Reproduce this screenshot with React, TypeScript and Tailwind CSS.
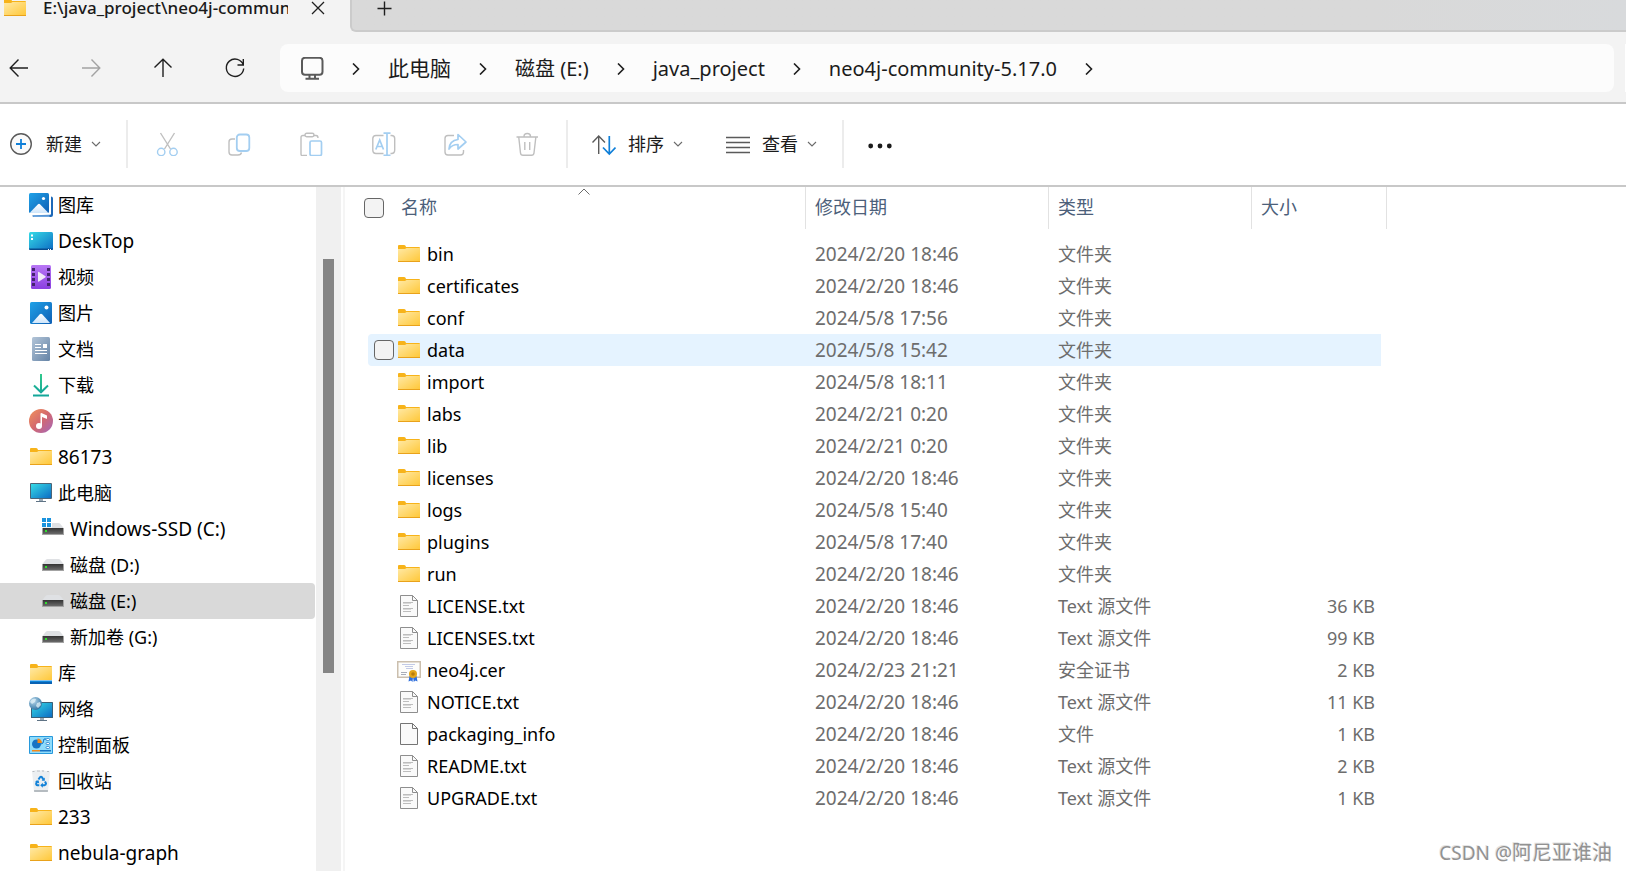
import { useState } from "react";
import type { ReactNode } from "react";

type IconName =
  | "gallery"
  | "desktop"
  | "video"
  | "picture"
  | "document"
  | "download"
  | "music"
  | "folder"
  | "pc"
  | "system-drive"
  | "drive"
  | "library"
  | "network"
  | "control"
  | "recycle"
  | "text"
  | "blank"
  | "cert";

type NavItem = { label: string; icon: IconName; indent?: boolean };

type FileRow = { name: string; date: string; type: string; size?: string; icon: IconName };

const NAV_ITEMS: NavItem[] = [
  { label: "图库", icon: "gallery" },
  { label: "DeskTop", icon: "desktop" },
  { label: "视频", icon: "video" },
  { label: "图片", icon: "picture" },
  { label: "文档", icon: "document" },
  { label: "下载", icon: "download" },
  { label: "音乐", icon: "music" },
  { label: "86173", icon: "folder" },
  { label: "此电脑", icon: "pc" },
  { label: "Windows-SSD (C:)", icon: "system-drive", indent: true },
  { label: "磁盘 (D:)", icon: "drive", indent: true },
  { label: "磁盘 (E:)", icon: "drive", indent: true },
  { label: "新加卷 (G:)", icon: "drive", indent: true },
  { label: "库", icon: "library" },
  { label: "网络", icon: "network" },
  { label: "控制面板", icon: "control" },
  { label: "回收站", icon: "recycle" },
  { label: "233", icon: "folder" },
  { label: "nebula-graph", icon: "folder" },
];

const FILES: FileRow[] = [
  { name: "bin", date: "2024/2/20 18:46", type: "文件夹", icon: "folder" },
  { name: "certificates", date: "2024/2/20 18:46", type: "文件夹", icon: "folder" },
  { name: "conf", date: "2024/5/8 17:56", type: "文件夹", icon: "folder" },
  { name: "data", date: "2024/5/8 15:42", type: "文件夹", icon: "folder" },
  { name: "import", date: "2024/5/8 18:11", type: "文件夹", icon: "folder" },
  { name: "labs", date: "2024/2/21 0:20", type: "文件夹", icon: "folder" },
  { name: "lib", date: "2024/2/21 0:20", type: "文件夹", icon: "folder" },
  { name: "licenses", date: "2024/2/20 18:46", type: "文件夹", icon: "folder" },
  { name: "logs", date: "2024/5/8 15:40", type: "文件夹", icon: "folder" },
  { name: "plugins", date: "2024/5/8 17:40", type: "文件夹", icon: "folder" },
  { name: "run", date: "2024/2/20 18:46", type: "文件夹", icon: "folder" },
  { name: "LICENSE.txt", date: "2024/2/20 18:46", type: "Text 源文件", size: "36 KB", icon: "text" },
  { name: "LICENSES.txt", date: "2024/2/20 18:46", type: "Text 源文件", size: "99 KB", icon: "text" },
  { name: "neo4j.cer", date: "2024/2/23 21:21", type: "安全证书", size: "2 KB", icon: "cert" },
  { name: "NOTICE.txt", date: "2024/2/20 18:46", type: "Text 源文件", size: "11 KB", icon: "text" },
  { name: "packaging_info", date: "2024/2/20 18:46", type: "文件", size: "1 KB", icon: "blank" },
  { name: "README.txt", date: "2024/2/20 18:46", type: "Text 源文件", size: "2 KB", icon: "text" },
  { name: "UPGRADE.txt", date: "2024/2/20 18:46", type: "Text 源文件", size: "1 KB", icon: "text" },
];

const CRUMBS = ["此电脑", "磁盘 (E:)", "java_project", "neo4j-community-5.17.0"];

// Gradients shared by all file and place icons.
function IconDefs() {
  return (
    <svg width="0" height="0" className="absolute" aria-hidden>
      <defs>
        <linearGradient id="g-folder" x1="0" y1="0" x2="1" y2="1">
          <stop offset="0" stopColor="#ffe9a6" />
          <stop offset="1" stopColor="#ffc83a" />
        </linearGradient>
        <linearGradient id="g-blue" x1="0" y1="0" x2="1" y2="1">
          <stop offset="0" stopColor="#1fa2e8" />
          <stop offset="1" stopColor="#0f5fb4" />
        </linearGradient>
        <linearGradient id="g-cyan" x1="0" y1="0" x2="1" y2="1">
          <stop offset="0" stopColor="#35dbe6" />
          <stop offset="1" stopColor="#0d6cc4" />
        </linearGradient>
        <linearGradient id="g-snow" x1="0" y1="0" x2="0" y2="1">
          <stop offset="0" stopColor="#ffffff" />
          <stop offset="1" stopColor="#cfe6fb" />
        </linearGradient>
        <linearGradient id="g-purple" x1="0" y1="0" x2="0" y2="1">
          <stop offset="0" stopColor="#b877f5" />
          <stop offset="1" stopColor="#8a3fe0" />
        </linearGradient>
        <linearGradient id="g-steel" x1="0" y1="0" x2="1" y2="1">
          <stop offset="0" stopColor="#b3c5d8" />
          <stop offset="1" stopColor="#6483a6" />
        </linearGradient>
        <linearGradient id="g-green" x1="0" y1="0" x2="0" y2="1">
          <stop offset="0" stopColor="#31c98c" />
          <stop offset="1" stopColor="#12a59a" />
        </linearGradient>
        <linearGradient id="g-music" x1="0" y1="0" x2="1" y2="1">
          <stop offset="0" stopColor="#f2935a" />
          <stop offset="0.5" stopColor="#d3686f" />
          <stop offset="1" stopColor="#a367bd" />
        </linearGradient>
        <linearGradient id="g-drive" x1="0" y1="0" x2="0" y2="1">
          <stop offset="0" stopColor="#333333" />
          <stop offset="1" stopColor="#6a6a6a" />
        </linearGradient>
        <radialGradient id="g-globe" cx="0.35" cy="0.3" r="0.8">
          <stop offset="0" stopColor="#b9d9ec" />
          <stop offset="1" stopColor="#246a9c" />
        </radialGradient>
      </defs>
    </svg>
  );
}

function DriveBody() {
  return (
    <>
      <path d="M1 11.500 5 6.500Q5.500 6 6.500 6H17.500Q18.500 6 19 6.500L23 11.500Z" fill="#dfe1e4" />
      <rect x="1" y="11" width="22" height="7" fill="#a3a3a3" />
      <rect x="2" y="11" width="20" height="6" fill="url(#g-drive)" />
      <rect x="4" y="13" width="2" height="2" fill="#2ee02e" />
    </>
  );
}

const ART: Record<IconName, ReactNode> = {
  gallery: (
    <>
      <path d="M22 3.500Q24 3.500 24 5.500V22Q24 24 22 24H5Q3.500 24 3.500 22.500L22 21.500Z" fill="#1c68b8" />
      <path d="M3.500 22.300H20.500V24H5Q3.500 24 3.500 22.300Z" fill="#6da5de" />
      <rect width="21" height="21.500" fill="#fff" />
      <rect width="20" height="20" rx="1.500" fill="url(#g-blue)" />
      <path d="M1 19.500 9 11.300Q10 10.300 11 11.300L19 19.500Q18.800 20 18 20H2Q1.200 20 1 19.500Z" fill="url(#g-snow)" />
      <circle cx="14.500" cy="5.500" r="1.600" fill="#fff" />
    </>
  ),
  desktop: (
    <>
      <rect y="3" width="24" height="18" rx="1.500" fill="url(#g-cyan)" />
      <path d="M0 19.500H24Q24 21 22.500 21H1.500Q0 21 0 19.500Z" fill="#084a8c" />
      <path d="M2 5.500h2v2H2zM2 9h2v2H2zM19 20h1v1h-1zM21 20h1v1h-1z" fill="#fff" />
    </>
  ),
  video: (
    <>
      <rect x="2" width="20" height="24" rx="1.500" fill="url(#g-purple)" />
      <path
        d="M3 3h3v3H3zM3 8h3v3H3zM3 13h3v3H3zM3 18h3v3H3zM18 3h3v3h-3zM18 8h3v3h-3zM18 13h3v3h-3zM18 18h3v3h-3z"
        fill="#45246f"
      />
      <path d="M9 7.500Q9 6.500 10 7L16.500 11.200Q17 11.700 16.500 12.200L10 16.500Q9 17 9 16Z" fill="#f1eaf8" />
    </>
  ),
  picture: (
    <>
      <rect x="1" y="1" width="22" height="22" rx="1.500" fill="url(#g-blue)" />
      <path d="M3 22 10.800 13.300Q12 12.200 13.200 13.300L21 22Z" fill="url(#g-snow)" />
      <circle cx="17.500" cy="6.500" r="2" fill="#fff" />
    </>
  ),
  document: (
    <>
      <rect x="3" width="18" height="24" rx="1.500" fill="url(#g-steel)" />
      <path d="M6 7.500h6M6 10.500h6M6 13.500h12M6 16.500h12" stroke="#fff" strokeWidth="1.200" />
      <rect x="14" y="7" width="4" height="4" fill="#fff" />
    </>
  ),
  download: (
    <>
      <path d="M12 1V19M5 12.500 12 19.300 19 12.500" fill="none" stroke="url(#g-green)" strokeWidth="2" />
      <path d="M11 1h2v18h-2zM4 21.500h16v2H4z" fill="url(#g-green)" />
    </>
  ),
  music: (
    <>
      <circle cx="12" cy="12" r="12" fill="url(#g-music)" />
      <circle cx="10" cy="17" r="3" fill="#fff" />
      <path d="M11.500 4.500Q12 3.800 13 4.300L18 6.500V10L13 8V17H11.500Z" fill="#fff" />
    </>
  ),
  folder: (
    <>
      <path d="M1 4Q1 3 2 3H7Q8 3 8.500 3.800L9 5H22Q23 5 23 6V10H1Z" fill="#f7b31a" />
      <path d="M1 7H8L9.500 6H23V19H1Z" fill="url(#g-folder)" />
      <rect x="1" y="19" width="22" height="1" fill="#e9a21b" />
    </>
  ),
  pc: (
    <>
      <rect x="1" y="2" width="22" height="16" rx="1" fill="#4b6477" />
      <rect x="2" y="3" width="20" height="14" fill="url(#g-cyan)" />
      <path d="M10 18h4v2h-4z" fill="#9aa9b5" />
      <path d="M7 20h10v1H7z" fill="#5f7385" />
    </>
  ),
  "system-drive": (
    <>
      <DriveBody />
      <rect width="11" height="10.500" fill="#fff" />
      <path d="M1 1h4v4H1zM6 1h4v4H6zM1 6h4v4H1zM6 6h4v4H6z" fill="#1b93de" />
    </>
  ),
  drive: <DriveBody />,
  library: (
    <>
      <path d="M1 4Q1 3 2 3H7Q8 3 8.500 3.800L9 5H22Q23 5 23 6V10H1Z" fill="#f7b31a" />
      <path d="M1 7H8L9.500 6H23V19H1Z" fill="url(#g-folder)" />
      <path d="M1 19.500h22V21H1z" fill="#0f86dc" />
      <path d="M1 21h22v2H1z" fill="#0a62b3" />
    </>
  ),
  network: (
    <>
      <rect x="2" y="5" width="22" height="16" rx="0.500" fill="#3a6078" />
      <rect x="3" y="6" width="20" height="14" fill="url(#g-cyan)" />
      <path d="M11 21h4v2h-4z" fill="#9aa9b5" />
      <path d="M8 23h10v1H8z" fill="#5f7385" />
      <circle cx="6.500" cy="6.500" r="6.500" fill="url(#g-globe)" />
      <path d="M2 3Q5 1 7 2L6 5 3 7 1 5ZM8 6 11 5 12 8 9 11 7 9Z" fill="#e3f1f8" opacity="0.75" />
    </>
  ),
  control: (
    <>
      <rect y="3" width="24" height="18" rx="1" fill="#2799dc" />
      <rect x="1" y="4" width="22" height="16" fill="#8fdcfb" />
      <circle cx="7.500" cy="11" r="4.500" fill="#1673c4" />
      <path d="M8.500 10V5.500A4.500 4.500 0 0 1 13 10Z" fill="#f28a1c" />
      <path d="M3 17h8v1.500H3z" fill="#f28a1c" />
      <path d="M11 17h11v1.500H11z" fill="#1673c4" />
      <path d="M12 11l2-1 1-4h2" fill="none" stroke="#1673c4" />
      <rect x="17" y="5.500" width="3.500" height="2" rx="1" fill="#fff" stroke="#1673c4" strokeWidth="0.700" />
      <rect x="17" y="9.500" width="3.500" height="2" rx="1" fill="#fff" stroke="#1673c4" strokeWidth="0.700" />
      <rect x="17" y="13.500" width="3.500" height="2" rx="1" fill="#fff" stroke="#1673c4" strokeWidth="0.700" />
    </>
  ),
  recycle: (
    <>
      <path d="M3 2 7 1 10 2 13 1 17 2 21 2.500 19 23H5Z" fill="#eceff1" />
      <path d="M5 21h14l-.2 2H5.200Z" fill="#b5bbc0" />
      <path d="M3.500 2.500h2M8 2h3M13 2h2M18 2.500h2" stroke="#b9bdc1" />
      <path
        d="M9.500 10.500 11 8.200Q12 7.500 13 8.200L14.300 10.500M16 12.500 17 14.500Q17 16 15.500 16.200H13M10.300 16.200H8.500Q7 16 7.200 14.300L8.500 12"
        fill="none"
        stroke="#1382d8"
        strokeWidth="2"
      />
      <path d="M15.800 8.500v3.200h-3.200zM13.800 13.700v5l-2.600-2.500zM6 12.200l3.500-1 .8 3.300z" fill="#1382d8" />
    </>
  ),
  text: (
    <>
      <path d="M3.500 1.500H15.500L20.500 6.500V22.500H3.500Z" fill="#fafafa" stroke="#8e8e8e" />
      <path d="M15.500 1.500V6.500H20.500" fill="none" stroke="#8e8e8e" />
      <path d="M6 8.500h10M6 11.500h6M6 14.500h10M6 17.500h8" stroke="#bdbdbd" />
      <path d="M6 9.500h8M6 15.500h8" stroke="#d9d9d9" />
    </>
  ),
  blank: (
    <>
      <path d="M3.500 1.500H15.500L20.500 6.500V22.500H3.500Z" fill="#fafafa" stroke="#757575" />
      <path d="M15.500 1.500V6.500H20.500" fill="none" stroke="#757575" />
    </>
  ),
  cert: (
    <>
      <rect x="0.750" y="3.750" width="22.500" height="15.500" fill="#fdfdfb" stroke="#cbbfae" strokeWidth="1.500" />
      <path d="M5 6.500h13M8 8.500h8M9 10.500h7" stroke="#c3cbe6" />
      <path d="M4 14.500h6M4 16.500h5" stroke="#a9adb8" />
      <path d="M12.500 18 11.500 23.500 14 22.500 15.500 24 16 19ZM19.500 18 20.500 23.500 18.200 22.500 16.800 24 16 19Z" fill="#2f6fdc" />
      <circle cx="16" cy="16" r="4" fill="#e3a51a" />
      <circle cx="16" cy="16" r="1.800" fill="#b77b0c" />
    </>
  ),
};

function ItemIcon({ name }: { name: IconName }) {
  return (
    <svg viewBox="0 0 24 24" className="size-6 shrink-0" aria-hidden>
      {ART[name]}
    </svg>
  );
}

function LineIcon({ children, color = "#1f1f1f", width = 1.4 }: { children: ReactNode; color?: string; width?: number }) {
  return (
    <svg viewBox="0 0 24 24" className="size-6 shrink-0" fill="none" stroke={color} strokeWidth={width} aria-hidden>
      {children}
    </svg>
  );
}

function ChevronRight() {
  return (
    <svg viewBox="0 0 12 12" className="size-3 shrink-0" fill="none" stroke="#1f1f1f" strokeWidth="1.600" aria-hidden>
      <path d="M3 0.500 8.500 6 3 11.500" />
    </svg>
  );
}

function ChevronDown() {
  return (
    <svg viewBox="0 0 12 12" className="-ml-1 size-3 shrink-0" fill="none" stroke="#6b6b6b" strokeWidth="1.100" aria-hidden>
      <path d="M2 4 6 8 10 4" />
    </svg>
  );
}

function Divider() {
  return <div className="mr-7 ml-6 h-12 w-0.5 shrink-0 bg-[#ececec]" />;
}

function TabStrip() {
  return (
    <div className="flex h-8 shrink-0 bg-[#f3f3f3]">
      <div className="flex w-[350px] shrink-0 items-start pl-[3px]">
        <div className="-mt-1">
          <ItemIcon name="folder" />
        </div>
        <span className="ml-4 h-8 w-[245px] overflow-hidden text-[17px] leading-4 font-medium whitespace-nowrap text-[#1a1a1a]">
          E:\java_project\neo4j-community-5.17.0
        </span>
        <button type="button" aria-label="Close tab" className="ml-[18px] -mt-1">
          <LineIcon width={1.3}>
            <path d="M6 6 18 18M18 6 6 18" />
          </LineIcon>
        </button>
      </div>
      <div className="flex flex-1 items-start rounded-bl-md border-b-2 border-l-2 border-[#cbcbcb] bg-linear-to-r from-[#d9d9d9] from-80% to-[#d8dadc]">
        <button type="button" aria-label="New tab" className="ml-5 -mt-1">
          <LineIcon width={1.4}>
            <path d="M12.500 5.500V19.500M5.500 12.500H19.500" />
          </LineIcon>
        </button>
      </div>
    </div>
  );
}

function AddressRow() {
  return (
    <div className="flex shrink-0 items-center border-b-2 border-[#c8c8c8] bg-[#f3f3f3] pt-3 pb-2.5 pl-[7px]">
      <div className="flex shrink-0 gap-12">
        <button type="button" aria-label="Back">
          <LineIcon>
            <path d="M21 12H3.500M11.500 3.500 3.200 12 11.500 20.500" />
          </LineIcon>
        </button>
        <button type="button" aria-label="Forward" disabled>
          <LineIcon color="#a3a3a3">
            <path d="M3 12H20.500M12.500 3.500 20.800 12 12.500 20.500" />
          </LineIcon>
        </button>
        <button type="button" aria-label="Up">
          <LineIcon>
            <path d="M12 21V3.500M3.500 11.500 12 3.200 20.500 11.500" />
          </LineIcon>
        </button>
        <button type="button" aria-label="Refresh">
          <LineIcon>
            <path d="M20.300 9A8.700 8.700 0 1 0 20.700 12.500M20.300 3V9H14.500" />
          </LineIcon>
        </button>
      </div>
      <nav
        aria-label="Path"
        className="ml-[33px] flex h-12 min-w-0 flex-1 items-center gap-[26px] overflow-hidden rounded-lg bg-[#fcfcfc] pt-0.5 pl-5 whitespace-nowrap text-[#1b1b1b]"
      >
        <svg viewBox="0 0 24 24" className="size-6 shrink-0" fill="none" stroke="#5a5a5a" strokeWidth="2" aria-hidden>
          <rect x="2" y="0.800" width="20.500" height="17" rx="3" />
          <path d="M9.500 18V21.500M15 18V21.500M5.500 21.800H19" />
        </svg>
        <ChevronRight />
        {CRUMBS.map((crumb, i) => (
          <span key={crumb} className="flex items-center gap-[26px]">
            <a href="#" className={i === 0 ? "text-[21px]" : "text-xl"}>
              {crumb}
            </a>
            <ChevronRight />
          </span>
        ))}
      </nav>
      <div className="ml-[11px] h-12 w-px shrink-0 bg-white" />
    </div>
  );
}

function CommandBar() {
  const soft = "#a3cef1";
  return (
    <div className="flex h-[83px] shrink-0 items-center border-b-2 border-[#c8c8c8] bg-white pb-px pl-2.5 text-lg whitespace-nowrap text-[#1b1b1b]">
      <button type="button" className="flex items-center gap-3">
        <LineIcon color="#5a5a5a">
          <circle cx="11" cy="12" r="10.300" fill="#fafafa" />
          <path d="M11 7V17M6 12H16" stroke="#0f7fd8" strokeWidth="1.800" />
        </LineIcon>
        新建
        <ChevronDown />
      </button>
      <Divider />
      <div className="flex gap-12 pr-0.5">
        <button type="button" aria-label="Cut" disabled>
          <LineIcon color="#bfbfbf">
            <path d="M4.500 1 14.500 17M18.500 1 8.500 17" />
            <circle cx="5.200" cy="20" r="3.700" stroke={soft} />
            <circle cx="17.500" cy="20" r="3.700" stroke={soft} />
          </LineIcon>
        </button>
        <button type="button" aria-label="Copy" disabled>
          <LineIcon color="#bfbfbf">
            <path d="M7 7H4Q1 7 1 10V20Q1 23 4 23H10Q13 23 13.500 20.500" />
            <rect x="8.800" y="2.500" width="12.500" height="16.500" rx="3" stroke={soft} strokeWidth="1.800" />
          </LineIcon>
        </button>
        <button type="button" aria-label="Paste" disabled>
          <LineIcon color="#bfbfbf">
            <path d="M5 3.500H3Q1 3.500 1 5.500V22Q1 24 3 23.500H7M13.500 3.500H16Q18 3.500 18 6" />
            <rect x="5" y="1.200" width="9" height="3.500" rx="1.700" />
            <rect x="10" y="9" width="11.500" height="14.500" rx="1.500" stroke={soft} strokeWidth="1.700" />
          </LineIcon>
        </button>
        <button type="button" aria-label="Rename" disabled>
          <LineIcon color="#bfbfbf">
            <path d="M11.500 3.500H4Q0.800 3.500 0.800 6.500V18Q0.800 21.500 4 21.500H11.500M18.500 3.500H19.500Q22.700 3.500 22.700 6.500V18Q22.700 21.500 19.500 21.500H18.500" />
            <path
              d="M3.800 17.500 7.700 8 11.500 17.500M5 14.500H10.300M15 1.500V23M11.500 1.200H18.500M11.500 23.300H18.500"
              stroke={soft}
              strokeWidth="1.700"
            />
          </LineIcon>
        </button>
        <button type="button" aria-label="Share" disabled>
          <LineIcon color="#bfbfbf">
            <path d="M10 3.500H4Q1 3.500 1 6.500V20Q1 23 4 23H16.500Q19.500 23 19.500 20V18" />
            <path
              d="M14 7.500V2.500L22 10 14 17V12.500Q8 12.500 5 17Q5.500 8.500 14 7.500Z"
              stroke={soft}
              strokeLinejoin="round"
              strokeWidth="1.700"
            />
          </LineIcon>
        </button>
        <button type="button" aria-label="Delete" disabled>
          <LineIcon color="#bfbfbf">
            <path d="M0.500 5H22M8 4.500Q8 1.500 11.300 1.500 14.500 1.500 14.500 4.500M2.800 5.500 4.500 21Q4.700 23.300 7 23.300H15.500Q17.700 23.300 18 21L19.800 5.500M8.800 10V18M13.700 10V18" />
          </LineIcon>
        </button>
      </div>
      <Divider />
      <button type="button" className="-ml-1 flex items-center gap-3">
        <LineIcon color="#5a5a5a">
          <path d="M6.700 22V4M0.500 10.500 6.700 4 13 10.500" />
          <path d="M17.300 4V22M11 15.500 17.300 22 23.500 15.500" stroke="#0f7fd8" strokeWidth="1.700" />
        </LineIcon>
        排序
        <ChevronDown />
      </button>
      <button type="button" className="ml-[42px] flex items-center gap-3">
        <LineIcon color="#5a5a5a">
          <path d="M0 5.500H24M0 10.500H24M0 15.500H24M0 20.500H24" />
        </LineIcon>
        查看
        <ChevronDown />
      </button>
      <Divider />
      <button type="button" aria-label="More" className="-ml-1">
        <svg viewBox="0 0 24 24" className="size-6" fill="#1b1b1b" aria-hidden>
          <circle cx="2.700" cy="14" r="2.400" />
          <circle cx="12" cy="14" r="2.400" />
          <circle cx="21.300" cy="14" r="2.400" />
        </svg>
      </button>
    </div>
  );
}

// Purely Latin labels are set one pixel larger so they keep pace with the Chinese ones.
const isLatin = (label: string) => /^[\x20-\x7e]+$/.test(label);

function Sidebar() {
  const [current, setCurrent] = useState("磁盘 (E:)");
  return (
    <div className="flex w-[345px] shrink-0 overflow-hidden border-r-2 border-[#f5f5f5]">
      <ul className="mr-px w-[315px] shrink-0">
        {NAV_ITEMS.map((item) => (
          <li key={item.label}>
            <button
              type="button"
              onClick={() => setCurrent(item.label)}
              className={`flex h-9 w-full items-center gap-[5px] rounded-r-sm text-left whitespace-nowrap text-black ${
                isLatin(item.label) ? "text-[19px]" : "text-lg"
              } ${item.indent ? "pl-[41px]" : "pl-[29px]"} ${item.label === current ? "bg-[#d9d9d9]" : ""}`}
            >
              <ItemIcon name={item.icon} />
              {item.label}
            </button>
          </li>
        ))}
      </ul>
      <div className="w-[25px] shrink-0 bg-[#f0f0f0] pt-18">
        <div className="mx-[7px] h-[414px] bg-[#858585]" />
      </div>
    </div>
  );
}

function CheckBox({ label, className = "" }: { label: string; className?: string }) {
  return (
    <input
      type="checkbox"
      aria-label={label}
      className={`block size-5 appearance-none rounded border border-[#666] bg-[#f3f3f3] checked:bg-[#0f7fd8] ${className}`}
    />
  );
}

function FileTable() {
  const [active, setActive] = useState("data");
  const head = "flex h-[42px] items-center border-r border-[#e2e2e2] pb-0.5";
  return (
    <div className="min-w-0 flex-1 overflow-hidden bg-white pl-[15px]">
      <table className="w-[1027px] table-fixed border-collapse text-lg whitespace-nowrap">
        <colgroup>
          <col className="w-2" />
          <col className="w-7" />
          <col className="w-[410px]" />
          <col className="w-[243px]" />
          <col className="w-[203px]" />
          <col className="w-[129px]" />
          <col className="w-1.5" />
        </colgroup>
        <thead className="text-left text-[#4c607a]">
          <tr>
            <th colSpan={2} className="p-0 pb-[9px] pl-1">
              <CheckBox label="Select all" />
            </th>
            <th className="relative p-0 pb-[9px] font-normal">
              <div className={`${head} pl-[5px]`}>名称</div>
              <svg
                viewBox="0 0 12 7"
                className="absolute top-px left-[182px] h-[7px] w-3"
                fill="none"
                stroke="#6b6b6b"
                aria-hidden
              >
                <path d="M0.500 6.500 6 1 11.500 6.500" />
              </svg>
            </th>
            <th className="p-0 pb-[9px] font-normal">
              <div className={`${head} pl-[9px]`}>修改日期</div>
            </th>
            <th className="p-0 pb-[9px] font-normal">
              <div className={`${head} pl-[9px]`}>类型</div>
            </th>
            <th colSpan={2} className="p-0 pb-[9px] font-normal">
              <div className={`${head} pl-[9px]`}>大小</div>
            </th>
          </tr>
        </thead>
        <tbody className="text-[#6d6d6d]">
          {FILES.map((file) => {
            const on = file.name === active;
            const bg = on ? "bg-[#e5f3ff]" : "";
            return (
              <tr key={file.name} onMouseEnter={() => setActive(file.name)}>
                <td className="p-0" />
                <td className={`h-8 rounded-l-sm p-0 pl-1.5 ${bg}`}>
                  <CheckBox label={file.name} className={on ? "" : "opacity-0"} />
                </td>
                <td className={`p-0 pl-px text-black ${bg}`}>
                  <div className="flex items-center gap-1.5">
                    <ItemIcon name={file.icon} />
                    {file.name}
                  </div>
                </td>
                <td className={`p-0 pl-[9px] text-[19px] leading-7 ${bg}`}>{file.date}</td>
                <td className={`p-0 pl-[9px] ${bg}`}>{file.type}</td>
                <td className={`p-0 pr-1.5 text-right ${bg}`}>{file.size}</td>
                <td className="p-0" />
              </tr>
            );
          })}
        </tbody>
      </table>
    </div>
  );
}

export default function App() {
  return (
    <div className="relative flex h-screen flex-col overflow-hidden bg-white font-['Noto_Sans','Noto_Sans_CJK_SC',sans-serif]">
      <IconDefs />
      <TabStrip />
      <AddressRow />
      <CommandBar />
      <div className="flex min-h-0 flex-1">
        <Sidebar />
        <FileTable />
      </div>
      <p className="absolute right-3.5 bottom-1 text-[19px] text-[#929292] [text-shadow:-1px_-1px_0_#e4e4e4]">
        CSDN @<span className="text-xl">阿尼亚谁油</span>
      </p>
    </div>
  );
}
